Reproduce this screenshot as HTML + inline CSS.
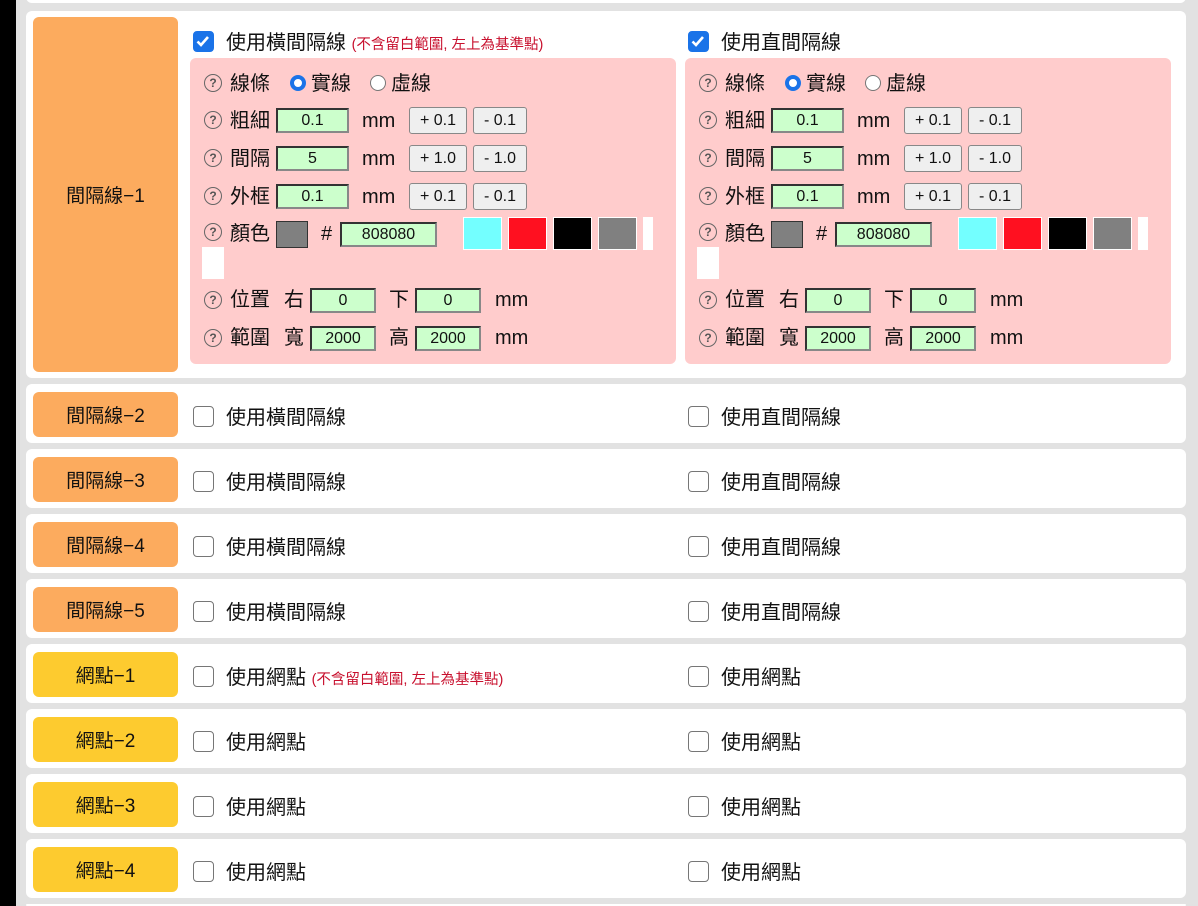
<!DOCTYPE html>
<html><head><meta charset="utf-8"><style>
*{box-sizing:border-box;margin:0;padding:0}
html{width:1198px;height:906px;overflow:hidden}
body{width:1198px;height:906px;overflow:hidden;background:#e2e2e2;font-family:"Liberation Sans","Noto Sans CJK TC",sans-serif;color:#111;position:relative}
.blk{position:absolute;left:0;top:0;width:16px;height:906px;background:#000}
.row{position:absolute;left:26px;width:1160px;background:#fff;border-radius:6px}
.lab{position:absolute;left:7px;width:145px;border-radius:6px;display:flex;align-items:center;justify-content:center;font-size:19px}
.o{background:#fcab5e}.y{background:#fdcb2f}
.cb{position:absolute;width:21px;height:21px;border:1.5px solid #767676;border-radius:4px;background:#fff}
.cb.on{background:#1a73e8;border-color:#1a73e8}
.t{position:absolute;font-size:20px;line-height:24px;white-space:nowrap}
.note{font-size:14.5px;color:#c8102e}
.pink{position:absolute;top:58px;width:486px;height:306px;background:#ffcccc;border-radius:6px}
.a{position:absolute;white-space:nowrap;font-size:20px;line-height:24px}
.q{position:absolute;width:18px;height:18px;border:1.3px solid #666;border-radius:50%;font-size:12px;line-height:16px;text-align:center;color:#555;font-weight:bold}
.in{position:absolute;height:25px;background:#ccffcc;border:2px solid #333;border-right-color:#888;border-bottom-color:#888;font-size:16px;line-height:21px;text-align:center}
.bt{position:absolute;height:27px;background:#efefef;border:1px solid #888;border-radius:3px;font-size:16px;line-height:25px;text-align:center}
.rd{position:absolute;width:16px;height:16px;border-radius:50%;background:#fff;border:1px solid #767676}
.rd.on{border:4px solid #1a73e8}
.sw{position:absolute;top:159px;width:39px;height:33px;border:1px solid #fff}
</style></head><body>
<div class="blk"></div>
<div class="row" style="top:-20px;height:23px"></div>
<div class="row" style="top:11px;height:367px">
<div class="lab o" style="top:6px;height:355px">間隔線−1</div>
</div>
<div class="cb on" style="left:193px;top:31px"><svg width="18" height="18" viewBox="0 0 18 18"><path d="M3.5 9.5l3.5 3.5 7-8" stroke="#fff" stroke-width="2.6" fill="none"/></svg></div>
<div class="t" style="left:226px;top:31px">使用橫間隔線 <span class="note">(不含留白範圍, 左上為基準點)</span></div>
<div class="cb on" style="left:688px;top:31px"><svg width="18" height="18" viewBox="0 0 18 18"><path d="M3.5 9.5l3.5 3.5 7-8" stroke="#fff" stroke-width="2.6" fill="none"/></svg></div>
<div class="t" style="left:721px;top:31px">使用直間隔線</div>

<div class="pink" style="left:190px">
<div class="q" style="left:14px;top:16px">?</div><div class="a" style="left:40px;top:14px">線條</div>
<div class="rd on" style="left:100px;top:17px"></div><div class="a" style="left:121px;top:14px">實線</div>
<div class="rd" style="left:180px;top:17px"></div><div class="a" style="left:201px;top:14px">虛線</div>
<div class="q" style="left:14px;top:53px">?</div><div class="a" style="left:40px;top:51px">粗細</div>
<div class="in" style="left:86px;top:50px;width:73px">0.1</div><div class="a" style="left:172px;top:51px">mm</div>
<div class="bt" style="left:219px;top:49px;width:58px">+ 0.1</div><div class="bt" style="left:283px;top:49px;width:54px">- 0.1</div>
<div class="q" style="left:14px;top:91px">?</div><div class="a" style="left:40px;top:89px">間隔</div>
<div class="in" style="left:86px;top:88px;width:73px">5</div><div class="a" style="left:172px;top:89px">mm</div>
<div class="bt" style="left:219px;top:87px;width:58px">+ 1.0</div><div class="bt" style="left:283px;top:87px;width:54px">- 1.0</div>
<div class="q" style="left:14px;top:129px">?</div><div class="a" style="left:40px;top:127px">外框</div>
<div class="in" style="left:86px;top:126px;width:73px">0.1</div><div class="a" style="left:172px;top:127px">mm</div>
<div class="bt" style="left:219px;top:125px;width:58px">+ 0.1</div><div class="bt" style="left:283px;top:125px;width:54px">- 0.1</div>
<div class="q" style="left:14px;top:165px">?</div><div class="a" style="left:40px;top:164px">顏色</div>
<div style="position:absolute;left:86px;top:163px;width:32px;height:27px;background:#808080;border:1px solid #333"></div>
<div class="a" style="left:131px;top:164px">#</div>
<div class="in" style="left:150px;top:164px;width:97px">808080</div>
<div class="sw" style="left:273px;background:#73ffff"></div>
<div class="sw" style="left:318px;background:#ff1020"></div>
<div class="sw" style="left:363px;background:#000"></div>
<div class="sw" style="left:408px;background:#808080"></div>
<div style="position:absolute;left:453px;top:159px;width:10px;height:33px;background:#fff"></div>
<div style="position:absolute;left:12px;top:189px;width:22px;height:32px;background:#fff"></div>
<div class="q" style="left:14px;top:233px">?</div><div class="a" style="left:40px;top:230px">位置</div>
<div class="a" style="left:94px;top:230px">右</div><div class="in" style="left:120px;top:230px;width:66px">0</div>
<div class="a" style="left:199px;top:230px">下</div><div class="in" style="left:225px;top:230px;width:66px">0</div>
<div class="a" style="left:305px;top:230px">mm</div>
<div class="q" style="left:14px;top:271px">?</div><div class="a" style="left:40px;top:268px">範圍</div>
<div class="a" style="left:94px;top:268px">寬</div><div class="in" style="left:120px;top:268px;width:66px">2000</div>
<div class="a" style="left:199px;top:268px">高</div><div class="in" style="left:225px;top:268px;width:66px">2000</div>
<div class="a" style="left:305px;top:268px">mm</div>
</div>

<div class="pink" style="left:685px">
<div class="q" style="left:14px;top:16px">?</div><div class="a" style="left:40px;top:14px">線條</div>
<div class="rd on" style="left:100px;top:17px"></div><div class="a" style="left:121px;top:14px">實線</div>
<div class="rd" style="left:180px;top:17px"></div><div class="a" style="left:201px;top:14px">虛線</div>
<div class="q" style="left:14px;top:53px">?</div><div class="a" style="left:40px;top:51px">粗細</div>
<div class="in" style="left:86px;top:50px;width:73px">0.1</div><div class="a" style="left:172px;top:51px">mm</div>
<div class="bt" style="left:219px;top:49px;width:58px">+ 0.1</div><div class="bt" style="left:283px;top:49px;width:54px">- 0.1</div>
<div class="q" style="left:14px;top:91px">?</div><div class="a" style="left:40px;top:89px">間隔</div>
<div class="in" style="left:86px;top:88px;width:73px">5</div><div class="a" style="left:172px;top:89px">mm</div>
<div class="bt" style="left:219px;top:87px;width:58px">+ 1.0</div><div class="bt" style="left:283px;top:87px;width:54px">- 1.0</div>
<div class="q" style="left:14px;top:129px">?</div><div class="a" style="left:40px;top:127px">外框</div>
<div class="in" style="left:86px;top:126px;width:73px">0.1</div><div class="a" style="left:172px;top:127px">mm</div>
<div class="bt" style="left:219px;top:125px;width:58px">+ 0.1</div><div class="bt" style="left:283px;top:125px;width:54px">- 0.1</div>
<div class="q" style="left:14px;top:165px">?</div><div class="a" style="left:40px;top:164px">顏色</div>
<div style="position:absolute;left:86px;top:163px;width:32px;height:27px;background:#808080;border:1px solid #333"></div>
<div class="a" style="left:131px;top:164px">#</div>
<div class="in" style="left:150px;top:164px;width:97px">808080</div>
<div class="sw" style="left:273px;background:#73ffff"></div>
<div class="sw" style="left:318px;background:#ff1020"></div>
<div class="sw" style="left:363px;background:#000"></div>
<div class="sw" style="left:408px;background:#808080"></div>
<div style="position:absolute;left:453px;top:159px;width:10px;height:33px;background:#fff"></div>
<div style="position:absolute;left:12px;top:189px;width:22px;height:32px;background:#fff"></div>
<div class="q" style="left:14px;top:233px">?</div><div class="a" style="left:40px;top:230px">位置</div>
<div class="a" style="left:94px;top:230px">右</div><div class="in" style="left:120px;top:230px;width:66px">0</div>
<div class="a" style="left:199px;top:230px">下</div><div class="in" style="left:225px;top:230px;width:66px">0</div>
<div class="a" style="left:305px;top:230px">mm</div>
<div class="q" style="left:14px;top:271px">?</div><div class="a" style="left:40px;top:268px">範圍</div>
<div class="a" style="left:94px;top:268px">寬</div><div class="in" style="left:120px;top:268px;width:66px">2000</div>
<div class="a" style="left:199px;top:268px">高</div><div class="in" style="left:225px;top:268px;width:66px">2000</div>
<div class="a" style="left:305px;top:268px">mm</div>
</div>

<div class="row" style="top:384px;height:59px"><div class="lab o" style="top:8px;height:45px">間隔線−2</div></div>
<div class="cb" style="left:193px;top:406px"></div><div class="t" style="left:226px;top:406px">使用橫間隔線</div>
<div class="cb" style="left:688px;top:406px"></div><div class="t" style="left:721px;top:406px">使用直間隔線</div>

<div class="row" style="top:449px;height:59px"><div class="lab o" style="top:8px;height:45px">間隔線−3</div></div>
<div class="cb" style="left:193px;top:471px"></div><div class="t" style="left:226px;top:471px">使用橫間隔線</div>
<div class="cb" style="left:688px;top:471px"></div><div class="t" style="left:721px;top:471px">使用直間隔線</div>

<div class="row" style="top:514px;height:59px"><div class="lab o" style="top:8px;height:45px">間隔線−4</div></div>
<div class="cb" style="left:193px;top:536px"></div><div class="t" style="left:226px;top:536px">使用橫間隔線</div>
<div class="cb" style="left:688px;top:536px"></div><div class="t" style="left:721px;top:536px">使用直間隔線</div>

<div class="row" style="top:579px;height:59px"><div class="lab o" style="top:8px;height:45px">間隔線−5</div></div>
<div class="cb" style="left:193px;top:601px"></div><div class="t" style="left:226px;top:601px">使用橫間隔線</div>
<div class="cb" style="left:688px;top:601px"></div><div class="t" style="left:721px;top:601px">使用直間隔線</div>

<div class="row" style="top:644px;height:59px"><div class="lab y" style="top:8px;height:45px">網點−1</div></div>
<div class="cb" style="left:193px;top:666px"></div><div class="t" style="left:226px;top:666px">使用網點 <span class="note">(不含留白範圍, 左上為基準點)</span></div>
<div class="cb" style="left:688px;top:666px"></div><div class="t" style="left:721px;top:666px">使用網點</div>

<div class="row" style="top:709px;height:59px"><div class="lab y" style="top:8px;height:45px">網點−2</div></div>
<div class="cb" style="left:193px;top:731px"></div><div class="t" style="left:226px;top:731px">使用網點</div>
<div class="cb" style="left:688px;top:731px"></div><div class="t" style="left:721px;top:731px">使用網點</div>

<div class="row" style="top:774px;height:59px"><div class="lab y" style="top:8px;height:45px">網點−3</div></div>
<div class="cb" style="left:193px;top:796px"></div><div class="t" style="left:226px;top:796px">使用網點</div>
<div class="cb" style="left:688px;top:796px"></div><div class="t" style="left:721px;top:796px">使用網點</div>

<div class="row" style="top:839px;height:59px"><div class="lab y" style="top:8px;height:45px">網點−4</div></div>
<div class="cb" style="left:193px;top:861px"></div><div class="t" style="left:226px;top:861px">使用網點</div>
<div class="cb" style="left:688px;top:861px"></div><div class="t" style="left:721px;top:861px">使用網點</div>

<div class="row" style="top:904px;height:2px"></div>
</body></html>
